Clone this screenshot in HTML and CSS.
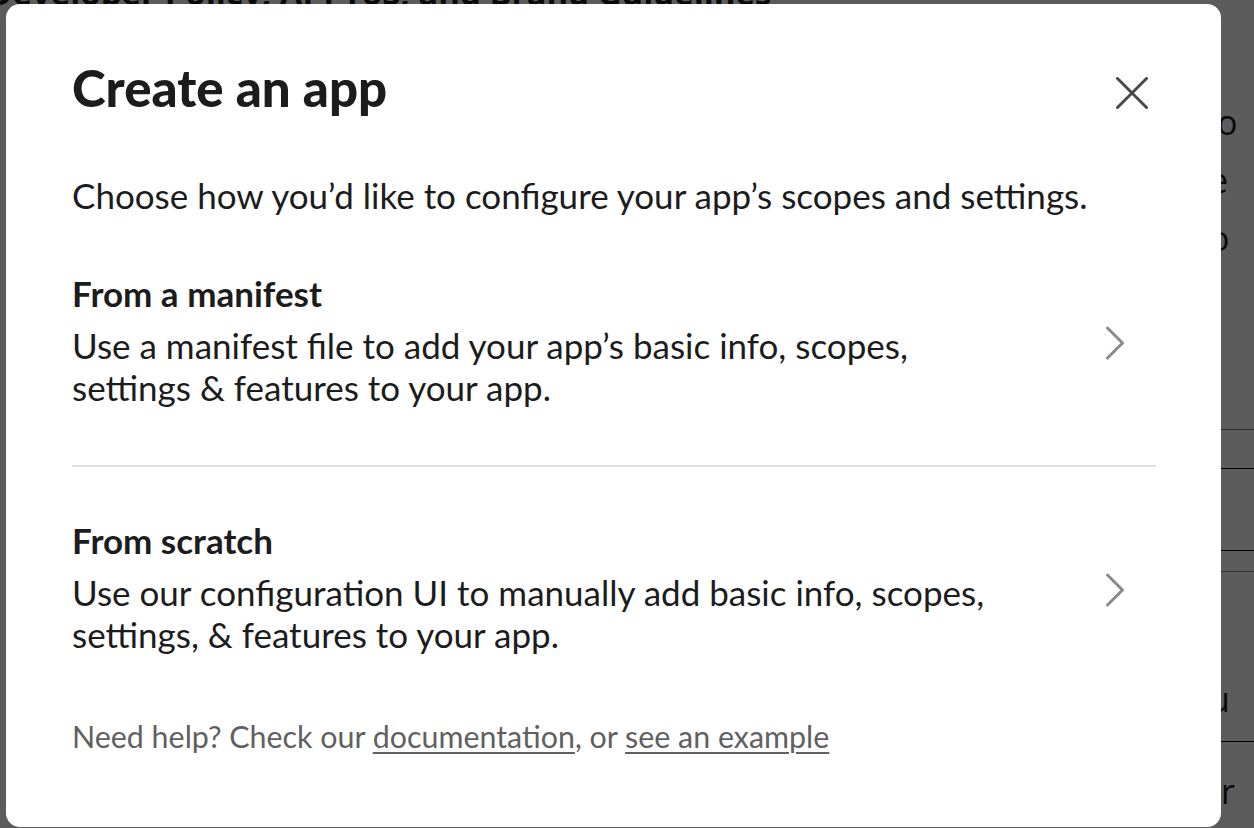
FILE: index.html
```html
<!DOCTYPE html>
<html lang="en">
<head>
<meta charset="utf-8">
<title>Create an app</title>
<link rel="stylesheet" href="styles.css">
</head>
<body>
<div class="page">
  <div class="page-title">Developer Policy, API ToS, and Brand Guidelines</div>
  <div class="page-side">
    <div class="side-row r1">to</div>
    <div class="side-row r2">e</div>
    <div class="side-row r3">o</div>
    <div class="side-line l1"></div>
    <div class="side-line l2"></div>
    <div class="side-line l3"></div>
    <div class="side-line l4"></div>
    <div class="side-row r4">u</div>
    <div class="side-line l5"></div>
    <div class="side-row r5">tr</div>
  </div>
</div>
<div class="overlay">
  <div class="modal">
    <div class="modal-header">
      <h1 class="modal-title">Create an app</h1>
      <button class="close-btn" aria-label="Close">
        <svg width="32" height="32" viewBox="0 0 32 32"><path d="M1.5 1.5 L30.5 30.5 M30.5 1.5 L1.5 30.5" stroke="#4b4a4b" stroke-width="3" stroke-linecap="round" fill="none"/></svg>
      </button>
    </div>
    <p class="intro">Choose how you’d like to configure your app’s scopes and settings.</p>
    <div class="option">
      <div class="option-text">
        <div class="option-title">From a manifest</div>
        <div class="option-desc">Use a manifest file to add your app’s basic info, scopes, settings &amp; features to your app.</div>
      </div>
      <svg class="chevron" width="20" height="34" viewBox="0 0 20 34"><path d="M2.5 2 L17.5 17 L2.5 32" stroke="#8b8a8b" stroke-width="3" stroke-linecap="round" stroke-linejoin="round" fill="none"/></svg>
    </div>
    <div class="divider"></div>
    <div class="option">
      <div class="option-text">
        <div class="option-title">From scratch</div>
        <div class="option-desc">Use our configuration UI to manually add basic info, scopes, settings, &amp; features to your app.</div>
      </div>
      <svg class="chevron" width="20" height="34" viewBox="0 0 20 34"><path d="M2.5 2 L17.5 17 L2.5 32" stroke="#8b8a8b" stroke-width="3" stroke-linecap="round" stroke-linejoin="round" fill="none"/></svg>
    </div>
    <p class="help">Need help? Check our <a href="#">documentation</a>, or <a href="#">see an example</a></p>
  </div>
</div>
</body>
</html>
```
FILE: styles.css
```css
* { box-sizing: border-box; }
html, body { margin: 0; padding: 0; height: 100%; overflow: hidden; }
body {
  font-family: Lato, "Liberation Sans", sans-serif;
  background: #ffffff;
  color: #1d1c1d;
}
.page {
  display: flex;
  flex-direction: column;
  height: 100%;
}
.page-title {
  font-size: 33px;
  font-weight: 700;
  margin-top: -30px;
  margin-left: -12px;
  white-space: nowrap;
  color: #1d1c1d;
  font-family: "Open Sans", sans-serif;
}
.page-side {
  margin-left: 1209px;
  display: flex;
  flex-direction: column;
  font-family: "Open Sans", sans-serif;
  font-size: 34px;
}
.side-row { height: 58px; line-height: 58px; white-space: nowrap; }
.r1 { margin-top: 78px; margin-left: -4px; }
.side-line { height: 1px; background: #000; width: 60px; }
.l1 { margin-top: 162px; background: #888; }
.l2 { margin-top: 38px; }
.l3 { margin-top: 81px; }
.l4 { margin-top: 20px; background: #888; }
.r4 { margin-top: 98px; }
.l5 { margin-top: 13px; }
.r5 { margin-top: 20px; }

.overlay {
  position: fixed;
  inset: 0;
  background: rgba(0, 0, 0, 0.64);
  padding: 4px 33px 1px 6px;
  display: flex;
}
.modal {
  flex: 1;
  background: #ffffff;
  border-radius: 14px;
  padding: 55px 65px 0 66px;
  display: flex;
  flex-direction: column;
}
.modal-header {
  display: flex;
  justify-content: space-between;
  align-items: flex-start;
}
.modal-title {
  margin: 0;
  font-size: 51px;
  line-height: 58px;
  font-weight: 900;
  color: #1d1c1d;
}
.close-btn {
  border: 0;
  background: none;
  padding: 0;
  margin: 18px 8px 0 0;
  width: 32px;
  height: 32px;
  display: flex;
}
.intro {
  margin: 57px 0 0 0;
  font-size: 35px;
  line-height: 42px;
  color: #1d1c1d;
}
.option {
  display: flex;
  align-items: center;
  justify-content: space-between;
  padding: 56px 0 57px;
}
.divider + .option { padding-top: 52px; }
.option-text { max-width: 935px; }
.option-title {
  font-size: 35px;
  line-height: 42px;
  font-weight: 700;
  margin-bottom: 10px;
}
.option-desc {
  font-size: 35px;
  line-height: 42px;
}
.chevron { margin: 5px 31px 0 0; flex: none; }
.divider { height: 2px; background: #e3e3e3; }
.help {
  margin: 6px 0 0 0;
  font-size: 30.4px;
  line-height: 36px;
  color: #616061;
}
.help a { color: #616061; text-decoration: underline; text-decoration-thickness: 2px; text-underline-offset: 4px; }
```
